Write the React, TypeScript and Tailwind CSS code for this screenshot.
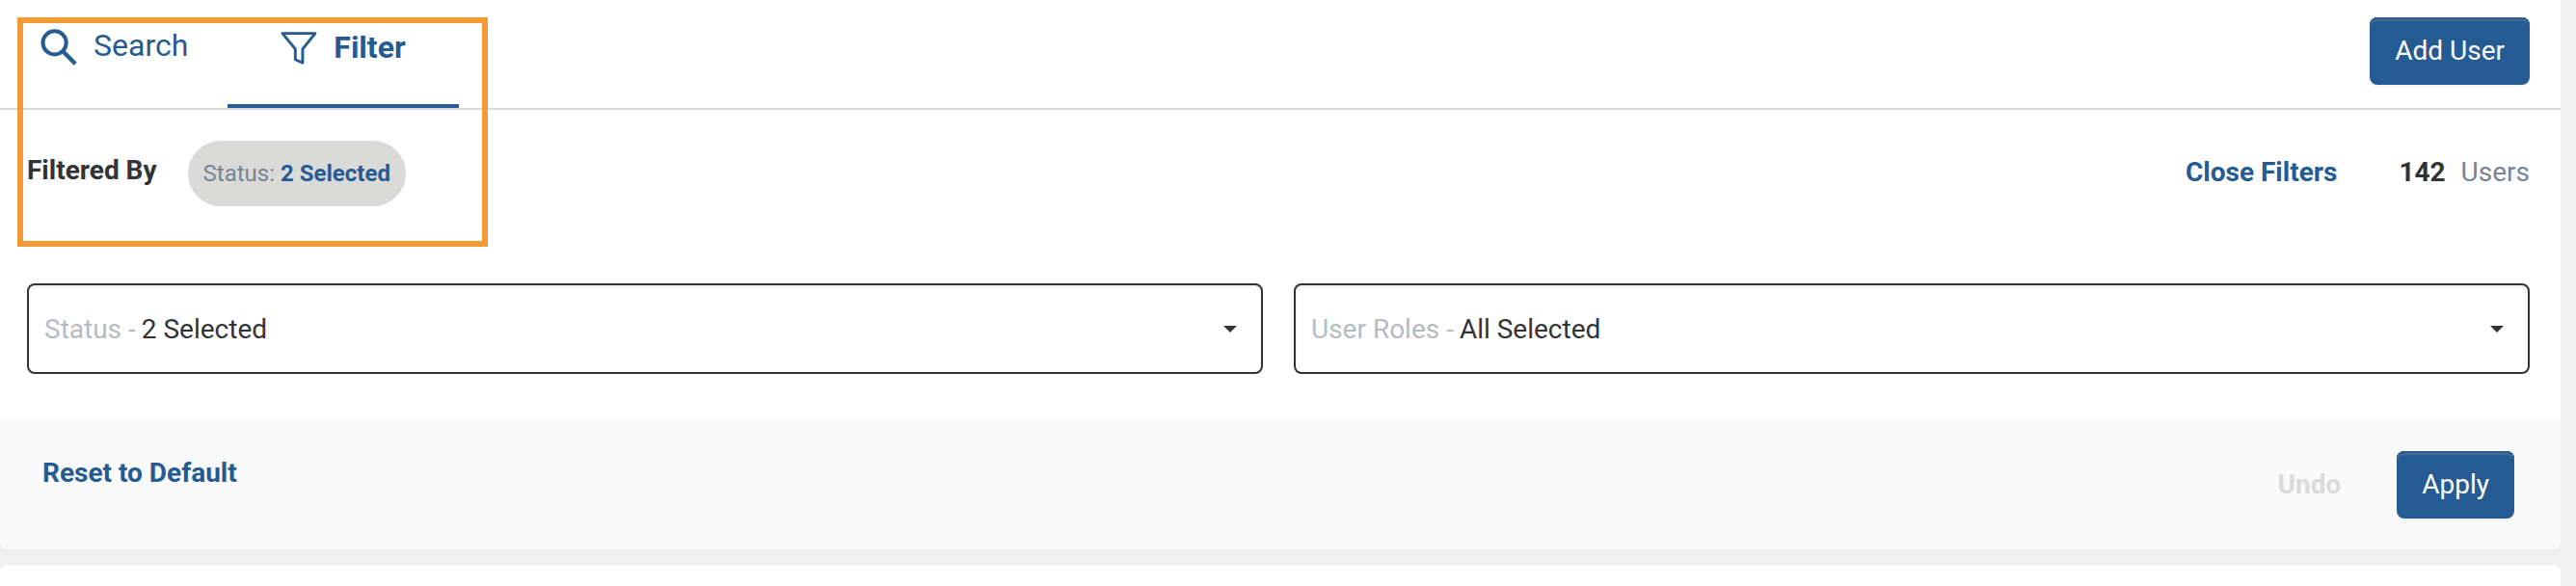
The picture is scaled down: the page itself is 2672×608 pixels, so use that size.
import type { ReactNode } from 'react';

const SearchIcon = () => (
  <svg aria-hidden="true" width="38" height="38" viewBox="0 0 38 38" fill="none" stroke="currentColor" className="shrink-0">
    <circle cx="14.6" cy="14.4" r="12.1" strokeWidth="4" />
    <path d="M23.8 23.8 L36.2 36.2" strokeWidth="4.4" />
  </svg>
);

const FilterIcon = () => (
  <svg aria-hidden="true" width="38" height="34" viewBox="0 0 38 34" fill="none" stroke="currentColor" className="shrink-0">
    <path d="M2 1.6 H36 L22.9 17.8 V32.2 L15.3 28.8 V17.8 Z" strokeWidth="2.9" strokeLinejoin="round" />
  </svg>
);

const Caret = () => (
  <svg aria-hidden="true" width="14" height="7" viewBox="0 0 14 7" fill="currentColor" className="pointer-events-none shrink-0">
    <path d="M0 0 H14 L7 7 Z" />
  </svg>
);

function PrimaryButton({ children }: { children: ReactNode }) {
  return (
    <button
      type="button"
      className="flex h-[70px] items-start rounded-lg bg-[#255b93] px-[26px] pt-[19px] text-white shadow-[inset_0_2px_0_#255b93,inset_0_4px_0_#45688f,0_2px_0_rgba(0,0,0,0.04)]"
    >
      {children}
    </button>
  );
}

function FilterSelect({ id, label, value }: { id: string; label: string; value: string }) {
  return (
    <div className="flex h-[94px] min-w-0 flex-1 items-center gap-1.5 rounded-lg border-2 border-[#323334] bg-white pr-[25px] pl-4 shadow-[inset_0_2px_2px_rgba(0,0,0,0.06)]">
      <label htmlFor={id} className="pt-0.5 whitespace-nowrap text-[#b6bbc1]">
        {label} -
      </label>
      <select id={id} defaultValue={value} className="min-w-0 flex-1 appearance-none bg-transparent pt-0.5 leading-8 outline-none">
        <option>{value}</option>
      </select>
      <Caret />
    </div>
  );
}

export default function App() {
  return (
    <div className="relative flex min-h-screen flex-col gap-4 bg-[#f0f0f0] pr-4 font-[Roboto,sans-serif] text-[28px] leading-8 text-[#323334]">
      <main className="rounded-b-lg bg-white">
        <header className="flex items-start justify-between border-b-2 border-[#dadad9] pr-8">
          <nav className="flex h-28 text-[32px] leading-10 text-[#255b93]">
            <button type="button" className="flex w-[236px] items-start gap-[17px] pt-[27px] pl-[42px]">
              <span className="pt-[3px]"><SearchIcon /></span>
              Search
            </button>
            <button
              type="button"
              aria-current="page"
              className="flex w-60 items-start justify-center gap-[17px] border-b-4 border-[#255b93] pt-[29px] font-bold"
            >
              <span className="pt-1"><FilterIcon /></span>
              Filter
            </button>
          </nav>
          <div className="pt-[18px]">
            <PrimaryButton>Add User</PrimaryButton>
          </div>
        </header>

        <section className="flex items-start justify-between pt-8 pr-8 pl-7">
          <div className="flex items-start gap-8">
            <h2 className="pt-[15px] font-bold">Filtered By</h2>
            <button type="button" className="flex h-[68px] items-center gap-1.5 rounded-full bg-[#dadad9] px-4 text-2xl leading-8">
              <span className="text-[#778492]">Status:</span>
              <span className="font-bold text-[#255b93]">2 Selected</span>
            </button>
          </div>
          <div className="flex items-start pt-[17px]">
            <button type="button" className="font-bold text-[#255b93]">Close Filters</button>
            <p className="flex gap-4 pl-16">
              <span className="font-bold">142</span>
              <span className="text-[#778492]">Users</span>
            </p>
          </div>
        </section>

        <section className="flex gap-8 pt-20 pr-8 pb-12 pl-7">
          <FilterSelect id="status" label="Status" value="2 Selected" />
          <FilterSelect id="roles" label="User Roles" value="All Selected" />
        </section>

        <footer className="flex items-start justify-between rounded-b-lg bg-[#fafafa] py-8 pr-12 pl-11">
          <button type="button" className="pt-[7px] font-bold text-[#255b93]">Reset to Default</button>
          <div className="flex items-start gap-[58px]">
            <button type="button" disabled className="pt-[19px] font-bold text-[#dadad9]">Undo</button>
            <PrimaryButton>Apply</PrimaryButton>
          </div>
        </footer>
      </main>

      <div className="flex-1 rounded-t-lg bg-white" />

      <div className="pointer-events-none absolute top-[18px] left-[18px] h-[238px] w-[488px] border-6 border-[#f39936]" />
    </div>
  );
}
